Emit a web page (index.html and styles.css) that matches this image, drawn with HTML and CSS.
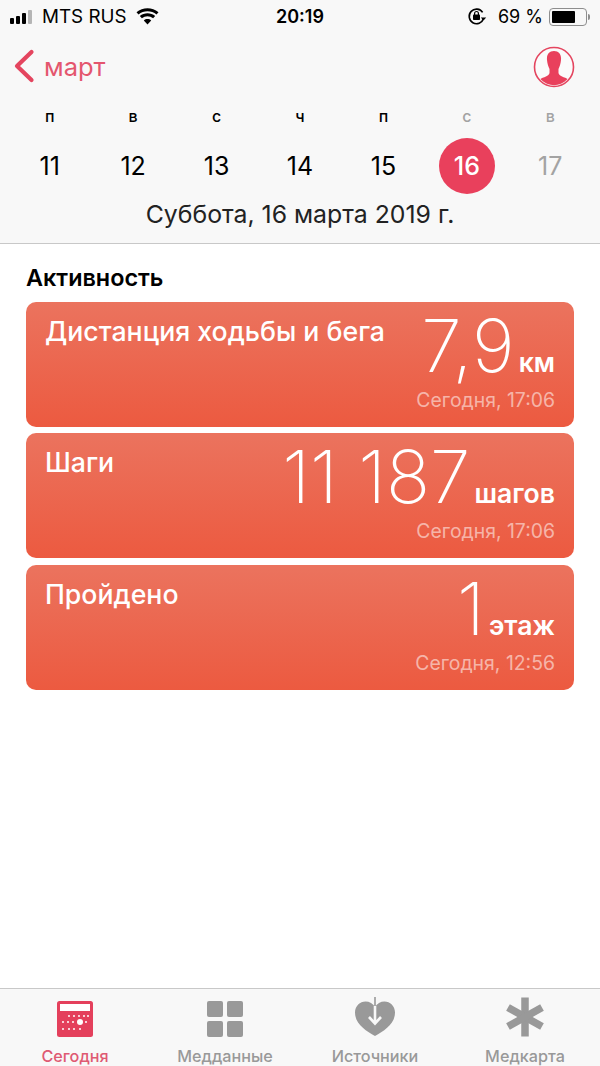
FILE: index.html
```html
<!DOCTYPE html>
<html lang="ru">
<head>
    <meta charset="UTF-8">
    <meta name="viewport" content="width=device-width, initial-scale=1.0">
    <title>Здоровье</title>
    <link rel="stylesheet" href="styles.css">
</head>
<body>
    <div class="phone">
        <header class="top">
            <div class="status">
                <div class="status-left">
                    <div class="signal">
                        <span class="s1"></span><span class="s2"></span><span class="s3"></span><span class="s4"></span>
                    </div>
                    <span class="carrier">MTS RUS</span>
                    <svg class="wifi" width="23" height="17" viewBox="0 0 23 17">
                        <path d="M11.5 16.5 L7.8 12.4 C9.9 10.6 13.1 10.6 15.2 12.4 Z" fill="#000"/>
                        <path d="M5.9 10.3 L3.8 8 C8.1 4.2 14.9 4.2 19.2 8 L17.1 10.3 C13.9 7.6 9.1 7.6 5.9 10.3 Z" fill="#000"/>
                        <path d="M2.5 6.5 L0.5 4.3 C6.7 -1.1 16.3 -1.1 22.5 4.3 L20.5 6.5 C15.4 2.1 7.6 2.1 2.5 6.5 Z" fill="#000"/>
                    </svg>
                </div>
                <div class="clock">20:19</div>
                <div class="status-right">
                    <svg class="rotation" width="20" height="19" viewBox="0 0 20 19">
                        <path d="M16.5 11.5 A7.3 7.3 0 1 1 15.6 5.4" fill="none" stroke="#000" stroke-width="1.6"/>
                        <path d="M13.8 10.5 L19.2 10.5 L16.5 13.5 Z" fill="#000"/>
                        <rect x="6" y="7.6" width="7" height="5.4" rx="0.8" fill="#000"/>
                        <path d="M7.6 8 V6.4 A1.9 1.9 0 0 1 11.4 6.4 V8" fill="none" stroke="#000" stroke-width="1.2"/>
                    </svg>
                    <span class="percent">69 %</span>
                    <div class="battery"><div class="battery-fill"></div></div>
                    <div class="battery-tip"></div>
                </div>
            </div>

            <div class="nav">
                <a class="back">
                    <svg width="22" height="34" viewBox="0 0 22 34">
                        <path d="M18.5 3 L4 17 L18.5 31" fill="none" stroke="#e4455f" stroke-width="4.2" stroke-linecap="round" stroke-linejoin="round"/>
                    </svg>
                    <span>март</span>
                </a>
                <svg class="avatar" width="42" height="42" viewBox="0 0 42 42">
                    <defs><clipPath id="avatarClip"><circle cx="21" cy="21" r="18.2"/></clipPath></defs>
                    <circle cx="21" cy="21" r="19.5" fill="#fbfbfb" stroke="#e4455f" stroke-width="1.6"/>
                    <g clip-path="url(#avatarClip)" fill="#e9405c">
                        <path d="M21 5 C26 5 28.5 8.5 28 14 C27.7 18 26.500 21 25.500 23 L25.500 27 C26 30 31 31 36 33.500 L36 42 L6 42 L6 33.500 C11 31 16 30 16.500 27 L16.500 23 C15.500 21 14.300 18 14 14 C13.500 8.500 16 5 21 5 Z"/>
                    </g>
                </svg>
            </div>

            <div class="week">
                <span>П</span><span>В</span><span>С</span><span>Ч</span><span>П</span><span class="off">С</span><span class="off">В</span>
            </div>
            <div class="days">
                <span>11</span><span>12</span><span>13</span><span>14</span><span>15</span><span class="today">16</span><span class="off">17</span>
            </div>
            <div class="date">Суббота, 16 марта 2019 г.</div>
        </header>

        <main class="content">
            <h2>Активность</h2>

            <section class="card">
                <div class="card-title">Дистанция ходьбы и бега</div>
                <div class="card-side">
                    <div class="value"><span class="num">7,9</span><span class="unit">км</span></div>
                    <div class="when">Сегодня, 17:06</div>
                </div>
            </section>
            <section class="card">
                <div class="card-title">Шаги</div>
                <div class="card-side">
                    <div class="value"><span class="num">11 187</span><span class="unit">шагов</span></div>
                    <div class="when">Сегодня, 17:06</div>
                </div>
            </section>
            <section class="card">
                <div class="card-title">Пройдено</div>
                <div class="card-side">
                    <div class="value"><span class="num">1</span><span class="unit">этаж</span></div>
                    <div class="when">Сегодня, 12:56</div>
                </div>
            </section>
        </main>

        <nav class="tabs">
            <div class="tab active">
                <svg width="36" height="36" viewBox="0 0 36 36">
                    <rect x="0" y="0" width="36" height="36" rx="2.5" fill="#e4405c"/>
                    <rect x="3" y="3" width="30" height="7" fill="#fff"/>
                    <g fill="#fff">
                        <circle cx="12" cy="15" r="1"/><circle cx="17" cy="15" r="1"/><circle cx="22" cy="15" r="1"/><circle cx="27" cy="15" r="1"/><circle cx="31" cy="15" r="1"/>
                        <circle cx="6" cy="21" r="1"/><circle cx="11" cy="21" r="1"/><circle cx="16" cy="21" r="1"/><circle cx="23" cy="21" r="3"/><circle cx="29" cy="21" r="1"/>
                        <circle cx="6" cy="28" r="1"/><circle cx="12" cy="28" r="1"/><circle cx="17" cy="28" r="1"/><circle cx="23" cy="28" r="1"/>
                    </g>
                </svg>
                <span>Сегодня</span>
            </div>
            <div class="tab">
                <div class="grid-icon"><i></i><i></i><i></i><i></i></div>
                <span>Медданные</span>
            </div>
            <div class="tab">
                <svg width="42" height="40" viewBox="0 0 42 40">
                    <path d="M21 39 C12 34 1 27 1 15.5 C1 9 6 4.500 11.500 4.500 C15.500 4.500 19 6.500 21 10 C23 6.500 26.500 4.500 30.500 4.500 C36 4.500 41 9 41 15.500 C41 27 30 34 21 39 Z" fill="#999"/>
                    <path d="M21 9 V26 M15 20 L21 26.500 L27 20" fill="none" stroke="#f8f8f8" stroke-width="2.600"/>
                    <path d="M21 0 V9" stroke="#999" stroke-width="1.600"/>
                </svg>
                <span>Источники</span>
            </div>
            <div class="tab">
                <svg width="40" height="40" viewBox="0 0 40 40">
                    <g stroke="#999" stroke-width="7.500" stroke-linecap="butt">
                        <path d="M20 0.500 V39.500"/>
                        <path d="M3 10.500 L37 29.500"/>
                        <path d="M3 29.500 L37 10.500"/>
                    </g>
                </svg>
                <span>Медкарта</span>
            </div>
        </nav>
    </div>
</body>
</html>
```

FILE: styles.css
```css
* {
    box-sizing: border-box;
}
body {
    margin: 0;
    background: #fff;
    font-family: Inter, "Liberation Sans", sans-serif;
    color: #000;
}
.phone {
    width: 600px;
    height: 1066px;
    display: flex;
    flex-direction: column;
    overflow: hidden;
}
.top {
    height: 244px;
    background: #f8f8f8;
    border-bottom: 1px solid #c8c8c8;
}
.status {
    height: 33px;
    display: grid;
    grid-template-columns: 1fr auto 1fr;
    align-items: center;
    font-size: 18px;
    padding: 0 10px;
}
.status-left {
    display: flex;
    align-items: center;
}
.signal {
    display: flex;
    align-items: flex-end;
    gap: 2px;
    height: 14px;
    margin-right: 10px;
}
.signal span {
    width: 4px;
    background: #000;
    border-radius: 1px;
}
.signal .s1 { height: 6px; }
.signal .s2 { height: 8px; }
.signal .s3 { height: 11px; }
.signal .s4 { height: 14px; background: #b5b5b5; }
.carrier {
    font-size: 18.8px;
}
.wifi {
    margin-left: 9px;
}
.clock {
    font-weight: 600;
}
.status-right {
    display: flex;
    align-items: center;
    justify-content: flex-end;
}
.percent {
    margin-left: 11px;
    margin-right: 6px;
}
.battery {
    width: 38px;
    height: 18px;
    border: 1px solid #8e8e8e;
    border-radius: 4px;
    padding: 2px;
}
.battery-fill {
    width: 23px;
    height: 12px;
    background: #000;
    border-radius: 1px;
}
.battery-tip {
    width: 2px;
    height: 6px;
    background: #8e8e8e;
    border-radius: 0 2px 2px 0;
    margin-left: 1px;
}
.nav {
    height: 62px;
    display: flex;
    align-items: center;
    justify-content: space-between;
    padding: 4px 25px 0 13px;
}
.back {
    display: flex;
    align-items: center;
    gap: 9px;
    color: #e4566e;
    font-size: 25.5px;
}
.avatar {
    margin-top: 2px;
}
.week,
.days {
    display: grid;
    grid-template-columns: repeat(7, 1fr);
    padding: 0 8px;
    text-align: center;
}
.week {
    height: 28px;
    margin-top: 7px;
    align-items: center;
    font-size: 16px;
    font-weight: 500;
    text-transform: lowercase;
}
.days {
    height: 56px;
    margin-top: 8px;
    align-items: center;
    font-size: 25px;
}
.days span {
    justify-self: center;
    width: 56px;
    line-height: 56px;
}
.off {
    color: #a3a3a3;
}
.days .today {
    background: #e9405c;
    color: #fff;
    border-radius: 50%;
    font-weight: 500;
}
.date {
    text-align: center;
    font-size: 24.8px;
    margin-top: 5px;
    color: #222;
}
.content {
    flex: 1;
    padding: 0 26px;
}
h2 {
    margin: 20px 0 10px;
    font-size: 23.4px;
    line-height: 28px;
    font-weight: 600;
}
.card {
    height: 125px;
    margin-bottom: 6.300px;
    border-radius: 10px;
    background: linear-gradient(180deg, #eb735e, #ec5a40);
    color: #fff;
    display: flex;
    justify-content: space-between;
    padding: 13px 19px 15px 19px;
}
.card-title {
    font-size: 26.7px;
    font-weight: 500;
    line-height: 32px;
    white-space: nowrap;
}
.card-side {
    display: flex;
    flex-direction: column;
    align-items: flex-end;
    justify-content: flex-end;
}
.value {
    display: flex;
    align-items: baseline;
    gap: 4px;
    line-height: 46px;
    margin-bottom: 3px;
}
.num {
    font-size: 73px;
    font-weight: 250;
}
.unit {
    font-size: 26.6px;
    font-weight: 600;
}
.when {
    font-size: 19.4px;
    line-height: 24px;
    color: rgba(255, 255, 255, 0.55);
}
.tabs {
    height: 78px;
    background: #f8f8f8;
    border-top: 1px solid #c8c8c8;
    display: grid;
    grid-template-columns: repeat(4, 1fr);
}
.tab {
    display: flex;
    flex-direction: column;
    align-items: center;
    justify-content: flex-end;
    gap: 10px;
    font-size: 16.2px;
    line-height: 18px;
    font-weight: 500;
    color: #999;
    padding-bottom: 1px;
}
.tab.active {
    color: #df5a73;
}
.grid-icon {
    display: grid;
    grid-template-columns: 16px 16px;
    gap: 4px;
}
.grid-icon i {
    height: 16px;
    background: #999;
    border-radius: 2px;
}
```
